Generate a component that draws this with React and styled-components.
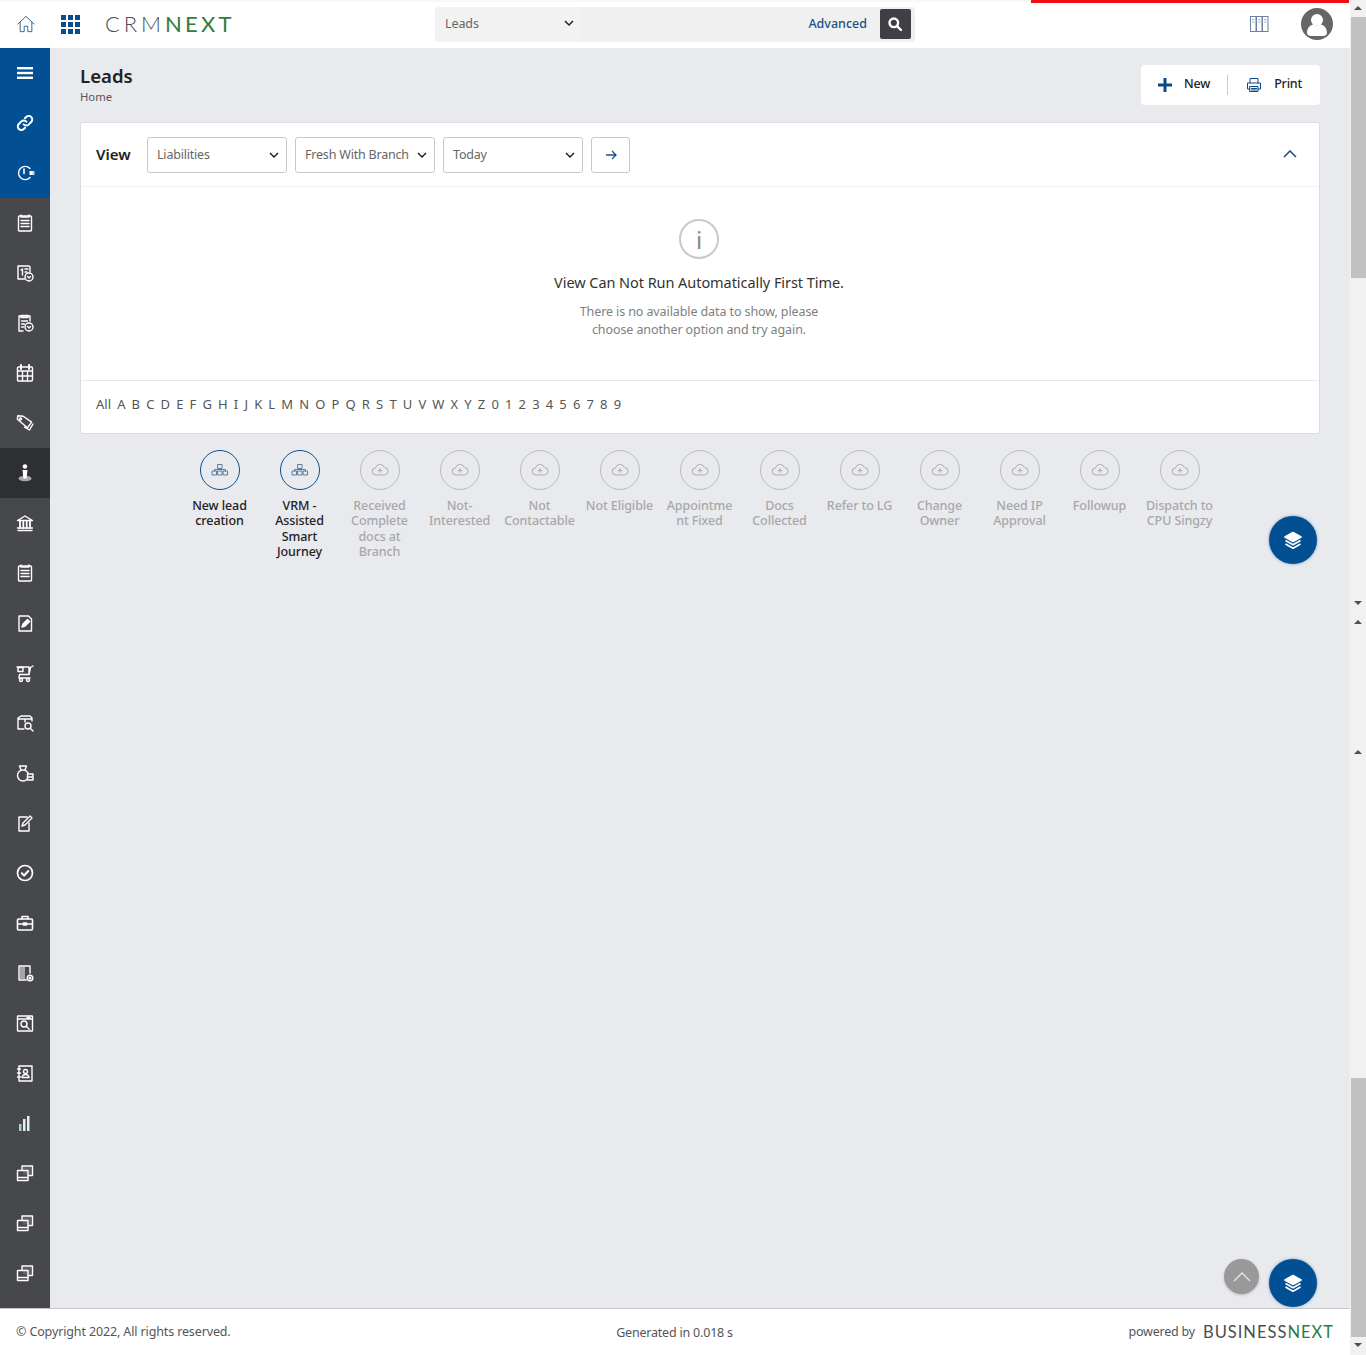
import React from "react";
import styled, { createGlobalStyle } from "styled-components";

const Global = createGlobalStyle`
  html, body { margin: 0; padding: 0; overflow: hidden; background: #fff; }
  * { box-sizing: border-box; }
  body { font-family: "Noto Sans", "Open Sans", sans-serif; color: #222; }
`;

const Page = styled.div`display: flex; width: 1366px; height: 1355px; overflow: hidden;`;
const Column = styled.div`position: relative; width: 1350px; display: flex; flex-direction: column;`;
const RedBar = styled.div`position: absolute; top: 0; left: 1031px; width: 318px; height: 3px; background: #f01010;`;

const Header = styled.header`height: 48px; background: #fff; display: flex; align-items: center; padding: 0 17px 2px 17px; border-top: 2px solid #f8f8f8;`;
const HomeLink = styled.div`width: 18px; height: 18px; color: #39658f; display: flex;`;
const Apps = styled.div`margin-left: 26px; width: 19px; height: 19px; display: grid; grid-template-columns: repeat(3, 5px); grid-auto-rows: 5px; gap: 2px;`;
const AppDot = styled.span`background: #0b4c8c;`;
const Logo = styled.div`margin-left: 25px; width: 290px; font-family: "Lato", sans-serif; font-weight: 300; font-size: 22px; letter-spacing: 3.900px; color: #4b4d50; line-height: 1; white-space: nowrap;`;
const LogoGreen = styled.span`color: #2f7d3a; font-weight: 400; letter-spacing: 3.300px;`;
const SearchBar = styled.div`margin-left: 40px; width: 480px; height: 35px; background: #f0f0f0; border-radius: 3px; display: flex; align-items: center;`;
const SearchType = styled.div`width: 146px; height: 35px; padding: 0 7px 2px 10px; display: flex; align-items: center; justify-content: space-between; font-size: 12.5px; letter-spacing: -.1px; color: #666; background: #f2f2f2; border-radius: 3px 0 0 3px;`;
const Advanced = styled.div`margin-left: auto; padding-bottom: 2px; font-size: 12.5px; font-weight: 500; color: #1c5287;`;
const SearchButton = styled.div`margin: 0 4px 0 13px; width: 31px; height: 30px; padding-right: 2px; background: #3f4045; border-radius: 2px; display: flex; align-items: center; justify-content: center; color: #fff;`;
const HeaderRight = styled.div`margin-left: auto; display: flex; align-items: center;`;
const Books = styled.div`width: 19px; height: 16px; color: #6d7fa3; display: flex; margin-right: 32px;`;
const Avatar = styled.div`width: 32px; height: 32px; border-radius: 50%; background: #666; overflow: hidden; display: flex;`;

const Body = styled.div`flex: 1; display: flex; min-height: 0;`;
const Sidebar = styled.nav`width: 50px; background: #47484b; display: flex; flex-direction: column;`;
const NavItem = styled.div`
  height: 50px; display: flex; align-items: center; justify-content: center; color: #fff;
  background: ${p => p.$blue ? "#034f94" : p.$active ? "#2e2f32" : "transparent"};
`;
const Main = styled.main`position: relative; flex: 1; background: #e9eaee; padding: 0 30px;`;
const TitleRow = styled.div`height: 74px; display: flex; justify-content: space-between; padding-top: 16px;`;
const TitleBlock = styled.div`display: flex; flex-direction: column;`;
const Title = styled.h1`margin: 0; font-size: 18.6px; line-height: 24px; font-weight: 600; color: #222;`;
const Crumb = styled.div`font-size: 11.3px; line-height: 16px; margin-top: 1px; color: #555;`;
const Actions = styled.div`width: 179px; height: 40px; margin-top: 1px; background: #fff; border-radius: 4px; display: flex; align-items: center; padding: 0 0 0 17px; font-size: 12.5px; letter-spacing: -.2px; font-weight: 500; color: #222;`;
const ActionText = styled.span`padding-bottom: 3px;`;
const ActionIcon = styled.span`display: flex; margin-right: ${p => p.$gap}px; color: #0d4a85;`;
const ActionSep = styled.span`width: 1px; height: 20px; background: #ccc; margin: 0 18px 0 17px;`;

const Card = styled.section`background: #fff; border: 1px solid #dcdcdc; border-radius: 2px; height: 312px; display: flex; flex-direction: column;`;
const FilterRow = styled.div`height: 64px; border-bottom: 1px solid #f2f2f2; display: flex; align-items: center; padding: 0 22px 0 15px; gap: 8px;`;
const ViewLabel = styled.div`width: 43px; font-size: 15px; font-weight: 600; color: #222; padding-bottom: 2px;`;
const Select = styled.div`width: 140px; height: 36px; border: 1px solid #c8c8c8; border-radius: 3px; padding: 0 7px 0 9px; display: flex; align-items: center; justify-content: space-between; font-size: 12.5px; letter-spacing: -.2px; color: #666; white-space: nowrap;`;
const GoButton = styled.div`width: 39px; height: 36px; border: 1px solid #c8c8c8; border-radius: 3px; display: flex; align-items: center; justify-content: center; color: #1c5287;`;
const Collapse = styled.div`margin-left: auto; margin-bottom: 2px; display: flex; color: #1c4a78;`;
const Empty = styled.div`flex: 1; display: flex; flex-direction: column; align-items: center; padding-top: 32px; margin-right: 2px;`;
const InfoCircle = styled.div`width: 40px; height: 40px; border: 2px solid #c9c9c9; border-radius: 50%; display: flex; align-items: center; justify-content: center; font-size: 24px; font-weight: 400; color: #888;`;
const EmptyTitle = styled.div`margin-top: 13px; font-size: 14.5px; line-height: 20px; letter-spacing: -.06px; color: #333;`;
const EmptyText = styled.div`margin-top: 11px; font-size: 12.5px; line-height: 18px; letter-spacing: -.1px; color: #808080; text-align: center; width: 260px;`;
const Alphabet = styled.div`height: 53px; flex: none; border-top: 1px solid #e6e6e6; display: flex; align-items: center; padding: 0 0 7px 15px; gap: 6.15px; font-size: 13px; color: #555;`;
const Stages = styled.div`display: flex; justify-content: center; margin-top: 16px; padding-right: 1px;`;
const Stage = styled.div`width: 80px; display: flex; flex-direction: column; align-items: center; text-align: center; color: ${p => p.$on ? "#222" : "#a8a8a8"}; font-size: 12.5px; font-weight: 500; letter-spacing: -.1px; line-height: 15.4px; padding: 0 2px;`;
const StageCircle = styled.div`width: 40px; height: 40px; border-radius: 50%; border: 1px solid ${p => p.$on ? "#0d4f8d" : "#bcbcbc"}; color: ${p => p.$on ? "#4d7297" : "#a6a6a6"}; display: flex; align-items: center; justify-content: center; margin-bottom: 8px;`;
const Fab = styled.div`position: absolute; left: 1219px; top: ${p => p.$top}px; width: 48px; height: 48px; border-radius: 50%; background: #034f94; box-shadow: 0 0 3px rgba(3,79,148,.5); display: flex; align-items: center; justify-content: center; color: #fff;`;
const TopButton = styled.div`position: absolute; left: 1174px; top: 1211px; width: 35px; height: 35px; border-radius: 50%; background: #999; box-shadow: 0 1px 3px rgba(0,0,0,.2); display: flex; align-items: center; justify-content: center; color: #e6e6e6;`;

const Footer = styled.footer`height: 47px; border-top: 1px solid #c8c8c8; background: #fff; display: grid; grid-template-columns: 1fr 1fr 1fr; align-items: center; padding: 0 17px 0 16px; font-size: 12.5px; color: #555;`;
const Copyright = styled.div`letter-spacing: -.13px; padding-bottom: 2px;`;
const Generated = styled.div`text-align: center; letter-spacing: -.2px;`;
const Powered = styled.div`display: flex; justify-content: flex-end; align-items: center; gap: 8px; letter-spacing: -.2px; padding-bottom: 1px;`;
const Brand = styled.span`font-family: "Lato", sans-serif; font-size: 16.5px; letter-spacing: 1px; color: #4b4d50; margin-right: -1px;`;
const BrandGreen = styled.span`color: #2f7d3a;`;

const Scrollbar = styled.div`width: 16px; background: #f1f1f1; display: flex; flex-direction: column; align-items: center;`;
const Gap = styled.div`height: ${p => p.$h}px; flex: none;`;
const Thumb = styled.div`width: 15px; height: ${p => p.$h}px; background: #c1c1c1; flex: none;`;
const Arrow = styled.div`width: 0; height: 0; flex: none; border-left: 4px solid transparent; border-right: 4px solid transparent; ${p => p.$down ? "border-top: 4px solid #505050;" : "border-bottom: 4px solid #505050;"}`;

const S = ({ children, size = 20, sw = 1.4, view = 20 }) => (
  <svg width={size} height={size} viewBox={`0 0 ${view} ${view}`} fill="none" stroke="currentColor" strokeWidth={sw} strokeLinecap="round" strokeLinejoin="round">{children}</svg>
);
const Chevron = ({ size = 10 }) => (
  <svg width={size} height={size} viewBox="0 0 10 10" fill="none" stroke="#222" strokeWidth="1.5"><path d="M1 3l4 4 4-4" /></svg>
);

const icons = {
  menu: <svg width="16" height="14" viewBox="0 0 16 14" fill="#fff"><rect y="1" width="16" height="2.4" /><rect y="5.8" width="16" height="2.4" /><rect y="10.6" width="16" height="2.4" /></svg>,
  link: <S sw={2}><path d="M8.6 11.4a3.4 3.4 0 0 0 5 .2l2.6-2.6a3.5 3.5 0 0 0-5-5L9.9 5.300" /><path d="M11.400 8.600a3.400 3.400 0 0 0-5-.2L3.800 11a3.500 3.500 0 0 0 5 5l1.300-1.300" /></S>,
  clock: <S><path d="M15 5.500a6.600 6.600 0 1 0 0 9" /><path d="M9 6v4.500" strokeWidth="1.600" /><rect x="14.500" y="8" width="3" height="4" fill="currentColor" stroke="none" /><path d="M17.500 9h1.500M17.500 11h1.500" /></S>,
  clipboard: <S><rect x="3.500" y="3" width="13" height="15" rx="1" /><path d="M6 2v2h8V2M6 7.500h8M6 10.500h8M6 13.500h8" /></S>,
  oneDoc: <S><path d="M9.500 16H3V3h11l1 1v5" /><path d="M6 7l1.500-1v6M10 6h3M10 9h2" /><circle cx="14" cy="14" r="4" /><path d="M12.500 13.500l1.500 1.500 1.500-1.500" /></S>,
  docDown: <S><path d="M8 18H4V3h11v5" /><path d="M6 2.500h7v2H6zM6.500 8h6M6.500 11h3M6.500 14h2" /><circle cx="14" cy="14" r="4" /><path d="M12.500 13.500l1.500 1.500 1.500-1.500" /></S>,
  calendar: <S><rect x="2.500" y="4" width="15" height="14" rx="1" /><path d="M6 2v4M14 2v4" strokeWidth="2" /><path d="M2.500 8h15M7.500 8v10M12.500 8v10M2.500 13h15" /></S>,
  tag: <S><path d="M2 7V3.500h5.500l9 5-3.500 6z" transform="rotate(6 10 10)" /><circle cx="5.500" cy="6" r="1" /><path d="M18 11l-3.500 6-5-2.800" /></S>,
  person: <svg width="20" height="20" viewBox="0 0 20 20" fill="#fff"><ellipse cx="10" cy="15.500" rx="6.500" ry="2.700" fill="#a8a8a8" /><circle cx="10" cy="3.500" r="2.300" /><path d="M7.500 7h5l-.7 6H8.200z" /><rect x="8.300" y="11" width="3.400" height="4.500" /></svg>,
  bank: <S><path d="M2.500 7.500L10 3l7.500 4.500zM3 17.500h14M2.500 15h15" /><path d="M5 8v7M8.300 8v7M11.700 8v7M15 8v7" strokeWidth="1.800" /></S>,
  edit: <S><path d="M4 3h9.500L16.500 6v12H4z" /><path d="M7 14l1-3 4.500-4.500 2 2L10 13z" fill="currentColor" /></S>,
  cart: <S><path d="M2 4h12v7.500H4.500L4 15h11M14 11.500L15.500 4.500 18 3" /><circle cx="6" cy="17" r="1.500" /><circle cx="13" cy="17" r="1.500" /><path d="M3 4.500h5v4H3z" /></S>,
  boxSearch: <S><path d="M9 16H3V5l3-2h9l2 2v3M3 6h14M10 6v3" /><circle cx="13" cy="13" r="3" /><path d="M15.200 15.200L18 18" /></S>,
  bag: <S><circle cx="8" cy="12.500" r="5.500" /><path d="M6 7L4.500 3h7L10 7" /><rect x="12.500" y="11" width="5.500" height="6" fill="#47484b" /><path d="M12.500 14h5" /></S>,
  note: <S><path d="M12 4H4v14h10v-8" /><path d="M7 13l1-3 7-7 2 2-7 7z" /></S>,
  check: <S sw={1.700}><circle cx="10" cy="10" r="7.500" /><path d="M6.800 10.300l2.300 2.200 4.200-4.500" strokeWidth="2" /></S>,
  brief: <S sw={1.600}><rect x="2.500" y="6" width="15" height="11" rx="1" /><path d="M7 6V3.500h6V6M2.500 11h15" /><rect x="8.500" y="10" width="3" height="2" fill="currentColor" /></S>,
  docGear: <S><path d="M11 17H4V3h11v7" /><rect x="5" y="4" width="5" height="12" fill="currentColor" stroke="none" opacity=".5" /><circle cx="15" cy="15" r="2.800" /><circle cx="15" cy="15" r=".8" /></S>,
  winSearch: <S><rect x="2.500" y="3" width="15" height="15" rx=".5" /><path d="M2.500 6h15M12 4.500h3" /><circle cx="9" cy="11" r="3" /><path d="M11.200 13.200l3 3" /></S>,
  contact: <S><rect x="4" y="3" width="13" height="15" /><path d="M2.500 6h3M2.500 10h3M2.500 14h3" /><circle cx="10.500" cy="8.500" r="2" /><path d="M7 14.500c.4-2.300 2-3 3.500-3s3.100.7 3.500 3z" /></S>,
  bars: <svg width="20" height="20" viewBox="0 0 20 20" fill="#e8eef0"><rect x="4" y="11" width="2.500" height="7" fill="#9fd0d0" /><rect x="8" y="6" width="2.500" height="12" /><rect x="12" y="3" width="2.500" height="15" /></svg>,
  windows: <S><path d="M7 7V3h10.500v9.500H13" /><rect x="2.500" y="7.500" width="10.500" height="10" /><path d="M2.500 14.500H13" /><rect x="8" y="4" width="8.500" height="7.500" fill="currentColor" stroke="none" opacity=".15" /></S>,
};

const navTop = ["menu", "link", "clock"];
const navRest = ["clipboard", "oneDoc", "docDown", "calendar", "tag", "person", "bank", "clipboard", "edit", "cart", "boxSearch", "bag", "note", "check", "brief", "docGear", "winSearch", "contact", "bars", "windows", "windows", "windows"];
const letters = ["All", ..."ABCDEFGHIJKLMNOPQRSTUVWXYZ0123456789"];
const stages = [
  ["New lead creation", true], ["VRM - Assisted Smart Journey", true], ["Received Complete docs at Branch"], ["Not-Interested"], ["Not Contactable"], ["Not Eligible"], ["Appointme nt Fixed"], ["Docs Collected"], ["Refer to LG"], ["Change Owner"], ["Need IP Approval"], ["Followup"], ["Dispatch to CPU Singzy"],
];

const Hierarchy = () => (
  <S size={20} sw={0.9}><rect x="8" y="4.500" width="4" height="4" /><rect x="2.500" y="11" width="4" height="4" /><rect x="8" y="11" width="4" height="4" /><rect x="13.500" y="11" width="4" height="4" /><path d="M4.500 11V9.500h11V11" /></S>
);
const Cloud = () => (
  <S size={20} sw={0.9}><path d="M6 15a3.500 3.500 0 0 1-.5-7 4.600 4.600 0 0 1 8.800-.6A3.800 3.800 0 0 1 14 15z" /><path d="M10 8.500v4M8 10.500h4" /></S>
);
const Layers = () => (
  <svg width="20" height="20" viewBox="0 0 20 20" fill="none" stroke="#fff" strokeWidth="1.700" strokeLinejoin="round"><path d="M10 2.500L18 7l-8 4.500L2 7z" fill="#fff" /><path d="M2.500 10.500L10 14.700l7.500-4.200M2.500 14L10 18.200 17.500 14" /></svg>
);

export default function App() {
  return (
    <Page>
      <Global />
      <Column>
        <RedBar />
        <Header>
          <HomeLink>
            <S size={18} sw={1.100}><path d="M1 10L10 1.500 19 10M3.500 8v10.500h4.500v-6h4v6h4.500V8" /></S>
          </HomeLink>
          <Apps>{Array.from({ length: 9 }).map((_, i) => <AppDot key={i} />)}</Apps>
          <Logo>CRM<LogoGreen>NEXT</LogoGreen></Logo>
          <SearchBar>
            <SearchType>Leads<Chevron /></SearchType>
            <Advanced>Advanced</Advanced>
            <SearchButton>
              <svg width="16" height="16" viewBox="0 0 16 16" fill="none" stroke="#fff" strokeWidth="2.400" strokeLinecap="round"><circle cx="6.800" cy="6.800" r="4.300" /><path d="M10.300 10.300L14 14" /></svg>
            </SearchButton>
          </SearchBar>
          <HeaderRight>
            <Books>
              <svg width="19" height="16" viewBox="0 0 19 16" fill="none" stroke="currentColor" strokeWidth="1"><rect x=".5" y=".5" width="5.500" height="15" /><rect x="6.500" y=".5" width="5.500" height="15" /><rect x="12.500" y=".5" width="5.500" height="15" /><path d="M2 3.500h2.500M2 6h2.500M8 3.500h2.500M8 6h2.500M14 3.500h2.500M14 6h2.500" stroke="#aab" /></svg>
            </Books>
            <Avatar>
              <svg width="32" height="32" viewBox="0 0 32 32" fill="#fff"><circle cx="16" cy="12" r="6" /><path d="M6 25c0-6 4-8 6-8.500 2.500 1.500 5.500 1.500 8 0 2 .5 6 2.500 6 8.500 0 2-2 3-4 3H10c-2 0-4-1-4-3z" /></svg>
            </Avatar>
          </HeaderRight>
        </Header>
        <Body>
          <Sidebar>
            {navTop.map((k, i) => <NavItem key={i} $blue>{icons[k]}</NavItem>)}
            {navRest.map((k, i) => <NavItem key={i} $active={k === "person"}>{icons[k]}</NavItem>)}
          </Sidebar>
          <Main>
            <TitleRow>
              <TitleBlock>
                <Title>Leads</Title>
                <Crumb>Home</Crumb>
              </TitleBlock>
              <Actions>
                <ActionIcon $gap={12}>
                  <svg width="14" height="14" viewBox="0 0 14 14" fill="#0d4a85"><rect x="5.500" width="3" height="14" /><rect y="5.500" width="14" height="3" /></svg>
                </ActionIcon>
                <ActionText>New</ActionText>
                <ActionSep />
                <ActionIcon $gap={12}>
                  <S size={16} sw={1} view={16}><path d="M4 6V1.500h8V6M4 12H1.500V6h13v6H12" /><rect x="4" y="9.500" width="8" height="5" /><path d="M5.500 11.500h5M5.500 13h5" /></S>
                </ActionIcon>
                <ActionText>Print</ActionText>
              </Actions>
            </TitleRow>
            <Card>
              <FilterRow>
                <ViewLabel>View</ViewLabel>
                <Select>Liabilities<Chevron /></Select>
                <Select>Fresh With Branch<Chevron /></Select>
                <Select>Today<Chevron /></Select>
                <GoButton>
                  <svg width="12" height="12" viewBox="0 0 12 12" fill="none" stroke="currentColor" strokeWidth="1.300"><path d="M1 6h10M7 2l4 4-4 4" /></svg>
                </GoButton>
                <Collapse>
                  <svg width="14" height="8" viewBox="0 0 14 8" fill="none" stroke="currentColor" strokeWidth="1.500"><path d="M1 7l6-6 6 6" /></svg>
                </Collapse>
              </FilterRow>
              <Empty>
                <InfoCircle>i</InfoCircle>
                <EmptyTitle>View Can Not Run Automatically First Time.</EmptyTitle>
                <EmptyText>There is no available data to show, please choose another option and try again.</EmptyText>
              </Empty>
              <Alphabet>{letters.map(l => <span key={l}>{l}</span>)}</Alphabet>
            </Card>
            <Stages>
              {stages.map(([label, on]) => (
                <Stage key={label} $on={on}>
                  <StageCircle $on={on}>{on ? <Hierarchy /> : <Cloud />}</StageCircle>
                  {label}
                </Stage>
              ))}
            </Stages>
            <Fab $top={468}><Layers /></Fab>
            <TopButton>
              <svg width="18" height="10" viewBox="0 0 18 10" fill="none" stroke="currentColor" strokeWidth="1.300"><path d="M1 9l8-8 8 8" /></svg>
            </TopButton>
            <Fab $top={1211}><Layers /></Fab>
          </Main>
        </Body>
        <Footer>
          <Copyright>© Copyright 2022, All rights reserved.</Copyright>
          <Generated>Generated in 0.018 s</Generated>
          <Powered>powered by <Brand>BUSINESS<BrandGreen>NEXT</BrandGreen></Brand></Powered>
        </Footer>
      </Column>
      <Scrollbar>
        <Gap $h={6} />
        <Arrow />
        <Gap $h={7} />
        <Thumb $h={261} />
        <Gap $h={323} />
        <Arrow $down />
        <Gap $h={15} />
        <Arrow />
        <Gap $h={126} />
        <Arrow />
        <Gap $h={324} />
        <Thumb $h={259} />
        <Gap $h={6} />
        <Arrow $down />
      </Scrollbar>
    </Page>
  );
}
